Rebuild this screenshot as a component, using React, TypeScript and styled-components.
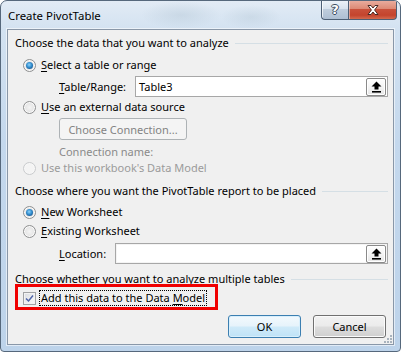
import React from "react";
import styled, { createGlobalStyle, css } from "styled-components";

const Global = createGlobalStyle`
  html, body { margin: 0; padding: 0; background: #ffffff; }
  body {
    width: 401px; height: 352px; overflow: hidden;
    font-family: "Noto Sans", "DejaVu Sans", sans-serif;
    font-size: 11px; color: #000;
  }
  * { box-sizing: border-box; }
`;

const Window = styled.div`
  position: relative;
  width: 401px;
  height: 352px;
  border: 1px solid #56687c;
  border-radius: 7px 7px 4px 4px;
  background:
    radial-gradient(ellipse 40px 14px at 180px 14px, rgba(170, 190, 205, 0.35), transparent),
    radial-gradient(ellipse 30px 12px at 250px 16px, rgba(170, 190, 205, 0.3), transparent),
    linear-gradient(180deg, #e2ebf5 0%, #d3e2f1 8%, #c4d8ed 40%, #bdd3ea 100%);
  display: flex;
  flex-direction: column;
  overflow: hidden;
`;

const TitleBar = styled.div`
  height: 28px;
  display: flex;
  align-items: flex-start;
  padding-left: 7px;
  flex-shrink: 0;
`;

const Title = styled.div`
  padding-top: 7px;
  line-height: 16px;
  font-size: 11.4px;
  color: #000;
`;

const Captions = styled.div`
  margin-left: auto;
  margin-right: 3px;
  margin-top: -1px;
  display: flex;
`;

const CaptionButton = styled.div<{ $kind: "help" | "close" }>`
  height: 20px;
  display: flex;
  align-items: center;
  justify-content: center;
  border: 1px solid #4d5f75;
  border-top: none;
  ${(p) =>
    p.$kind === "help"
      ? css`
          width: 27px;
          border-right: none;
          border-radius: 0 0 0 4px;
          background: linear-gradient(180deg, #eef3f9 0%, #d9e3ee 45%, #bfcddd 50%, #aebfd3 100%);
          box-shadow: inset 1px 1px 0 rgba(255, 255, 255, 0.7);
        `
      : css`
          width: 49px;
          border-radius: 0 0 4px 0;
          background: linear-gradient(180deg, #eab0a2 0%, #dd8a76 45%, #c9503a 50%, #c4442d 80%, #d36a4f 100%);
          box-shadow: inset 1px 1px 0 rgba(255, 255, 255, 0.45);
        `}
`;

const HelpGlyph = styled.span`
  font-family: "DejaVu Sans", sans-serif;
  font-weight: bold;
  font-size: 13px;
  line-height: 1;
  color: #ffffff;
  margin-top: -1px;
  text-shadow: 1px 0 0 #3b4b5e, -1px 0 0 #3b4b5e, 0 1px 0 #3b4b5e, 0 -1px 0 #3b4b5e;
`;

const Frame = styled.div`
  flex: 1;
  display: flex;
  padding: 0 6px 6px 6px;
`;

const Client = styled.div`
  position: relative;
  flex: 1;
  display: flex;
  flex-direction: column;
  border: 1px solid #8997a8;
  background: #f0f0f0;
  box-shadow: 0 0 0 1px rgba(255, 255, 255, 0.55);
`;

const Content = styled.div`
  flex: 1;
  display: flex;
  flex-direction: column;
  padding: 0 5px 0 7px;
`;

const SectionHeader = styled.div<{ $mt: number }>`
  display: flex;
  align-items: center;
  height: 16px;
  margin-top: ${(p) => p.$mt}px;
`;

const SectionLabel = styled.span`
  white-space: nowrap;
  line-height: 16px;
  color: #000;
`;

const Rule = styled.div`
  flex: 1;
  height: 1px;
  margin-left: 6px;
  background: #d5dfe5;
`;

const OptionRow = styled.div<{ $mt: number }>`
  position: relative;
  display: flex;
  align-items: center;
  height: 16px;
  margin-top: ${(p) => p.$mt}px;
  padding-left: 8px;
`;

const Radio = styled.span<{ $checked?: boolean; $disabled?: boolean }>`
  position: relative;
  width: 13px;
  height: 13px;
  border-radius: 50%;
  flex-shrink: 0;
  border: 1px solid ${(p) => (p.$disabled ? "#c9cbcd" : "#8f9091")};
  background: ${(p) =>
    p.$disabled
      ? "#f4f4f4"
      : "radial-gradient(circle at 50% 50%, #f4f4f4 0%, #e6e6e6 55%, #d3d3d3 100%)"};
  box-shadow: inset 0 0 0 1px ${(p) => (p.$disabled ? "#f7f7f7" : "#fbfbfb")};
  ${(p) =>
    p.$checked &&
    css`
      &::after {
        content: "";
        position: absolute;
        left: 2px;
        top: 2px;
        width: 7px;
        height: 7px;
        border-radius: 50%;
        background: radial-gradient(circle at 45% 40%, #8fd3fb 0%, #3a95d4 40%, #11508c 85%, #0c3c6e 100%);
      }
    `}
`;

const OptionLabel = styled.span<{ $disabled?: boolean }>`
  margin-left: 5px;
  white-space: nowrap;
  line-height: 16px;
  color: ${(p) => (p.$disabled ? "#9b9b9b" : "#000")};
`;

const U = styled.span`
  text-decoration: underline;
  text-underline-offset: 2px;
`;

const FieldRow = styled.div<{ $mt: number }>`
  display: flex;
  align-items: center;
  height: 21px;
  margin-top: ${(p) => p.$mt}px;
  padding-left: 44px;
`;

const FieldLabel = styled.span<{ $width: number }>`
  width: ${(p) => p.$width}px;
  flex-shrink: 0;
  white-space: nowrap;
`;

const TextBox = styled.div<{ $disabled?: boolean }>`
  flex: 1;
  height: 21px;
  display: flex;
  align-items: center;
  border: 1px solid #a7a7a7;
  background: #ffffff;
  box-shadow: ${(p) => (p.$disabled ? "inset 0 0 0 1px #f4f4f4" : "none")};
  padding: 0 1px 0 3px;
`;

const TextValue = styled.span`
  flex: 1;
  white-space: nowrap;
  line-height: 16px;
`;

const RefButton = styled.div`
  width: 20px;
  height: 18px;
  display: flex;
  align-items: center;
  justify-content: center;
  border: 1px solid #8a8a8a;
  border-radius: 2px;
  background: linear-gradient(180deg, #ffffff 0%, #f4f4f4 50%, #e6e6e6 100%);
  box-shadow: inset 0 0 0 1px #ffffff;
`;

const IndentRow = styled.div<{ $mt: number }>`
  display: flex;
  align-items: center;
  margin-top: ${(p) => p.$mt}px;
  padding-left: 44px;
`;

const PushButton = styled.div<{ $variant: "default" | "normal" | "disabled"; $width: number; $height: number }>`
  width: ${(p) => p.$width}px;
  height: ${(p) => p.$height}px;
  display: flex;
  align-items: center;
  justify-content: center;
  border-radius: 3px;
  white-space: nowrap;
  ${(p) =>
    p.$variant === "disabled"
      ? css`
          border: 1px solid #adb2b5;
          background: #f4f4f4;
          color: #838383;
        `
      : p.$variant === "default"
      ? css`
          border: 1px solid #3c7fb1;
          background: linear-gradient(180deg, #f3f9fd 0%, #e6f3fb 48%, #cfeaf9 52%, #bfe3f7 100%);
          box-shadow: inset 0 0 0 1px #d8effc;
          color: #000;
        `
      : css`
          border: 1px solid #707070;
          background: linear-gradient(180deg, #f2f2f2 0%, #ebebeb 48%, #dddddd 52%, #cfcfcf 100%);
          box-shadow: inset 0 0 0 1px #fbfbfb;
          color: #000;
        `}
`;

const GrayText = styled.span`
  color: #8a8a8a;
  line-height: 16px;
  height: 16px;
  white-space: nowrap;
`;

const Checkbox = styled.span`
  width: 13px;
  height: 13px;
  flex-shrink: 0;
  display: flex;
  align-items: center;
  justify-content: center;
  border: 1px solid #a0a2a4;
  background: linear-gradient(135deg, #d9dbe0 0%, #eef0f2 60%, #f8f8f8 100%);
  box-shadow: inset 0 0 0 1px #f2f2f2;
`;

const FocusLabel = styled.span`
  margin-left: 3px;
  padding: 0 1px;
  line-height: 14px;
  border: 1px dotted #000;
  white-space: nowrap;
`;

const Highlight = styled.div`
  position: absolute;
  left: 0;
  top: -6px;
  width: 203px;
  height: 26px;
  border: 3px solid #f00000;
  pointer-events: none;
`;

const ButtonRow = styled.div`
  display: flex;
  justify-content: flex-end;
  gap: 12px;
  margin-top: 9px;
  padding-right: 2px;
`;

const Grip = styled.svg`
  position: absolute;
  right: 0;
  bottom: 0;
`;

const UploadIcon = () => (
  <svg width="11" height="12" viewBox="0 0 11 12">
    <polygon points="5.5,0.5 0.5,5.5 3.5,5.5 3.5,8.5 7.5,8.5 7.5,5.5 10.5,5.5" fill="#000" />
    <rect x="1" y="10" width="9" height="1.6" fill="#000" />
  </svg>
);

const CloseIcon = () => (
  <svg width="14" height="12" viewBox="0 0 14 12">
    <path
      d="M2 1.5 L5 1.5 L7 4 L9 1.5 L12 1.5 L8.6 6 L12 10.5 L9 10.5 L7 8 L5 10.5 L2 10.5 L5.4 6 Z"
      fill="#ffffff"
      stroke="#4a2a24"
      strokeWidth="1"
      strokeLinejoin="round"
    />
  </svg>
);

const CheckIcon = () => (
  <svg width="9" height="9" viewBox="0 0 9 9">
    <path d="M1 4.5 L3.5 7 L8 1.5" fill="none" stroke="#4f64a8" strokeWidth="1.5" />
  </svg>
);

export default function App() {
  return (
    <>
      <Global />
      <Window>
        <TitleBar>
          <Title>Create PivotTable</Title>
          <Captions>
            <CaptionButton $kind="help">
              <HelpGlyph>?</HelpGlyph>
            </CaptionButton>
            <CaptionButton $kind="close">
              <CloseIcon />
            </CaptionButton>
          </Captions>
        </TitleBar>
        <Frame>
          <Client>
            <Content>
              <SectionHeader $mt={5}>
                <SectionLabel>Choose the data that you want to analyze</SectionLabel>
                <Rule />
              </SectionHeader>
              <OptionRow $mt={6}>
                <Radio $checked />
                <OptionLabel>
                  <U>S</U>elect a table or range
                </OptionLabel>
              </OptionRow>
              <FieldRow $mt={3}>
                <FieldLabel $width={76}>
                  <U>T</U>able/Range:
                </FieldLabel>
                <TextBox>
                  <TextValue>Table3</TextValue>
                  <RefButton>
                    <UploadIcon />
                  </RefButton>
                </TextBox>
              </FieldRow>
              <OptionRow $mt={2}>
                <Radio />
                <OptionLabel>
                  <U>U</U>se an external data source
                </OptionLabel>
              </OptionRow>
              <IndentRow $mt={3}>
                <PushButton $variant="disabled" $width={128} $height={22}>
                  Choose Connection...
                </PushButton>
              </IndentRow>
              <IndentRow $mt={4}>
                <GrayText>Connection name:</GrayText>
              </IndentRow>
              <OptionRow $mt={0}>
                <Radio $disabled />
                <OptionLabel $disabled>Use this workbook's Data Model</OptionLabel>
              </OptionRow>
              <SectionHeader $mt={7}>
                <SectionLabel>Choose where you want the PivotTable report to be placed</SectionLabel>
                <Rule />
              </SectionHeader>
              <OptionRow $mt={5}>
                <Radio $checked />
                <OptionLabel>
                  <U>N</U>ew Worksheet
                </OptionLabel>
              </OptionRow>
              <OptionRow $mt={3}>
                <Radio />
                <OptionLabel>
                  <U>E</U>xisting Worksheet
                </OptionLabel>
              </OptionRow>
              <FieldRow $mt={4}>
                <FieldLabel $width={56}>
                  <U>L</U>ocation:
                </FieldLabel>
                <TextBox $disabled>
                  <TextValue />
                  <RefButton>
                    <UploadIcon />
                  </RefButton>
                </TextBox>
              </FieldRow>
              <SectionHeader $mt={7}>
                <SectionLabel>Choose whether you want to analyze multiple tables</SectionLabel>
                <Rule />
              </SectionHeader>
              <OptionRow $mt={3}>
                <Checkbox>
                  <CheckIcon />
                </Checkbox>
                <FocusLabel>
                  Add this data to the Data <U>M</U>odel
                </FocusLabel>
                <Highlight />
              </OptionRow>
              <ButtonRow>
                <PushButton $variant="default" $width={73} $height={23}>
                  OK
                </PushButton>
                <PushButton $variant="normal" $width={73} $height={23}>
                  Cancel
                </PushButton>
              </ButtonRow>
            </Content>
            <Grip width="10" height="10" viewBox="0 0 10 10">
              <g fill="#a9b3bd">
                <rect x="7" y="1" width="2" height="2" />
                <rect x="4" y="4" width="2" height="2" />
                <rect x="7" y="4" width="2" height="2" />
                <rect x="1" y="7" width="2" height="2" />
                <rect x="4" y="7" width="2" height="2" />
                <rect x="7" y="7" width="2" height="2" />
              </g>
            </Grip>
          </Client>
        </Frame>
      </Window>
    </>
  );
}
